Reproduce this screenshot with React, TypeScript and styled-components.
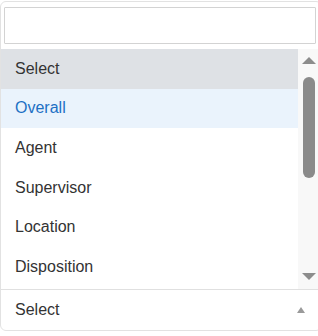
import React from 'react'
import styled, { createGlobalStyle } from 'styled-components'

const GlobalStyle = createGlobalStyle`
  html, body {
    margin: 0;
    padding: 0;
    overflow: hidden;
    background: #fff;
  }
  body {
    font-family: "Liberation Sans", Arial, sans-serif;
  }
`

const Panel = styled.div`
  width: 320px;
  margin-top: 1px;
  border: 1px solid #e2e2e2;
  border-radius: 6px;
  background: #fff;
  overflow: hidden;
`

const SearchWrap = styled.div`
  padding: 5px 3px 5px 3px;
`

const SearchInput = styled.input`
  display: block;
  box-sizing: border-box;
  width: 312px;
  height: 37px;
  margin: 0;
  border: 1px solid #d3d3d3;
  border-radius: 1px;
  outline: none;
  padding: 0 10px;
  font: inherit;
  font-size: 16px;
`

const ListArea = styled.div`
  display: flex;
  height: 240px;
  border-bottom: 1px solid #e0e0e0;
`

const Options = styled.ul`
  list-style: none;
  margin: 0;
  padding: 0;
  width: 297px;
  display: flex;
  flex-direction: column;
`

const Option = styled.li<{ $state?: 'selected' | 'hover' }>`
  height: 39.6px;
  flex-shrink: 0;
  display: flex;
  align-items: center;
  padding-left: 14px;
  font-size: 16px;
  color: ${p => (p.$state === 'hover' ? '#1d70c4' : '#333')};
  background: ${p =>
    p.$state === 'selected' ? '#dee1e5' : p.$state === 'hover' ? '#eaf3fc' : '#fff'};
`

const ScrollBar = styled.div`
  width: 20px;
  background: #f8f8f8;
  display: flex;
  flex-direction: column;
  align-items: center;
`

const Arrow = styled.div<{ $dir: 'up' | 'down' }>`
  width: 0;
  height: 0;
  margin-left: 2px;
  border-left: 7px solid transparent;
  border-right: 7px solid transparent;
  ${p =>
    p.$dir === 'up'
      ? 'border-bottom: 7px solid #8c8c8c; margin-top: 8px;'
      : 'border-top: 7px solid #8c8c8c; margin-top: auto; margin-bottom: 9px;'}
`

const Thumb = styled.div`
  width: 12px;
  height: 101px;
  margin-top: 13px;
  margin-left: 2px;
  border-radius: 6px;
  background: #8a8a8a;
`

const Footer = styled.div`
  height: 40px;
  display: flex;
  align-items: center;
  padding-left: 14px;
  font-size: 16px;
  color: #333;
`

const Caret = styled.span`
  width: 0;
  height: 0;
  margin-left: 238px;
  border-left: 4px solid transparent;
  border-right: 4px solid transparent;
  border-bottom: 6px solid #9a9a9a;
`

const items = ['Select', 'Overall', 'Agent', 'Supervisor', 'Location', 'Disposition']

const App: React.FC = () => {
  return (
    <>
      <GlobalStyle />
      <Panel>
        <SearchWrap>
          <SearchInput type="text" />
        </SearchWrap>
        <ListArea>
          <Options>
            {items.map((item, i) => (
              <Option key={item} $state={i === 0 ? 'selected' : i === 1 ? 'hover' : undefined}>
                {item}
              </Option>
            ))}
          </Options>
          <ScrollBar>
            <Arrow $dir="up" />
            <Thumb />
            <Arrow $dir="down" />
          </ScrollBar>
        </ListArea>
        <Footer>
          Select
          <Caret />
        </Footer>
      </Panel>
    </>
  )
}

export default App
